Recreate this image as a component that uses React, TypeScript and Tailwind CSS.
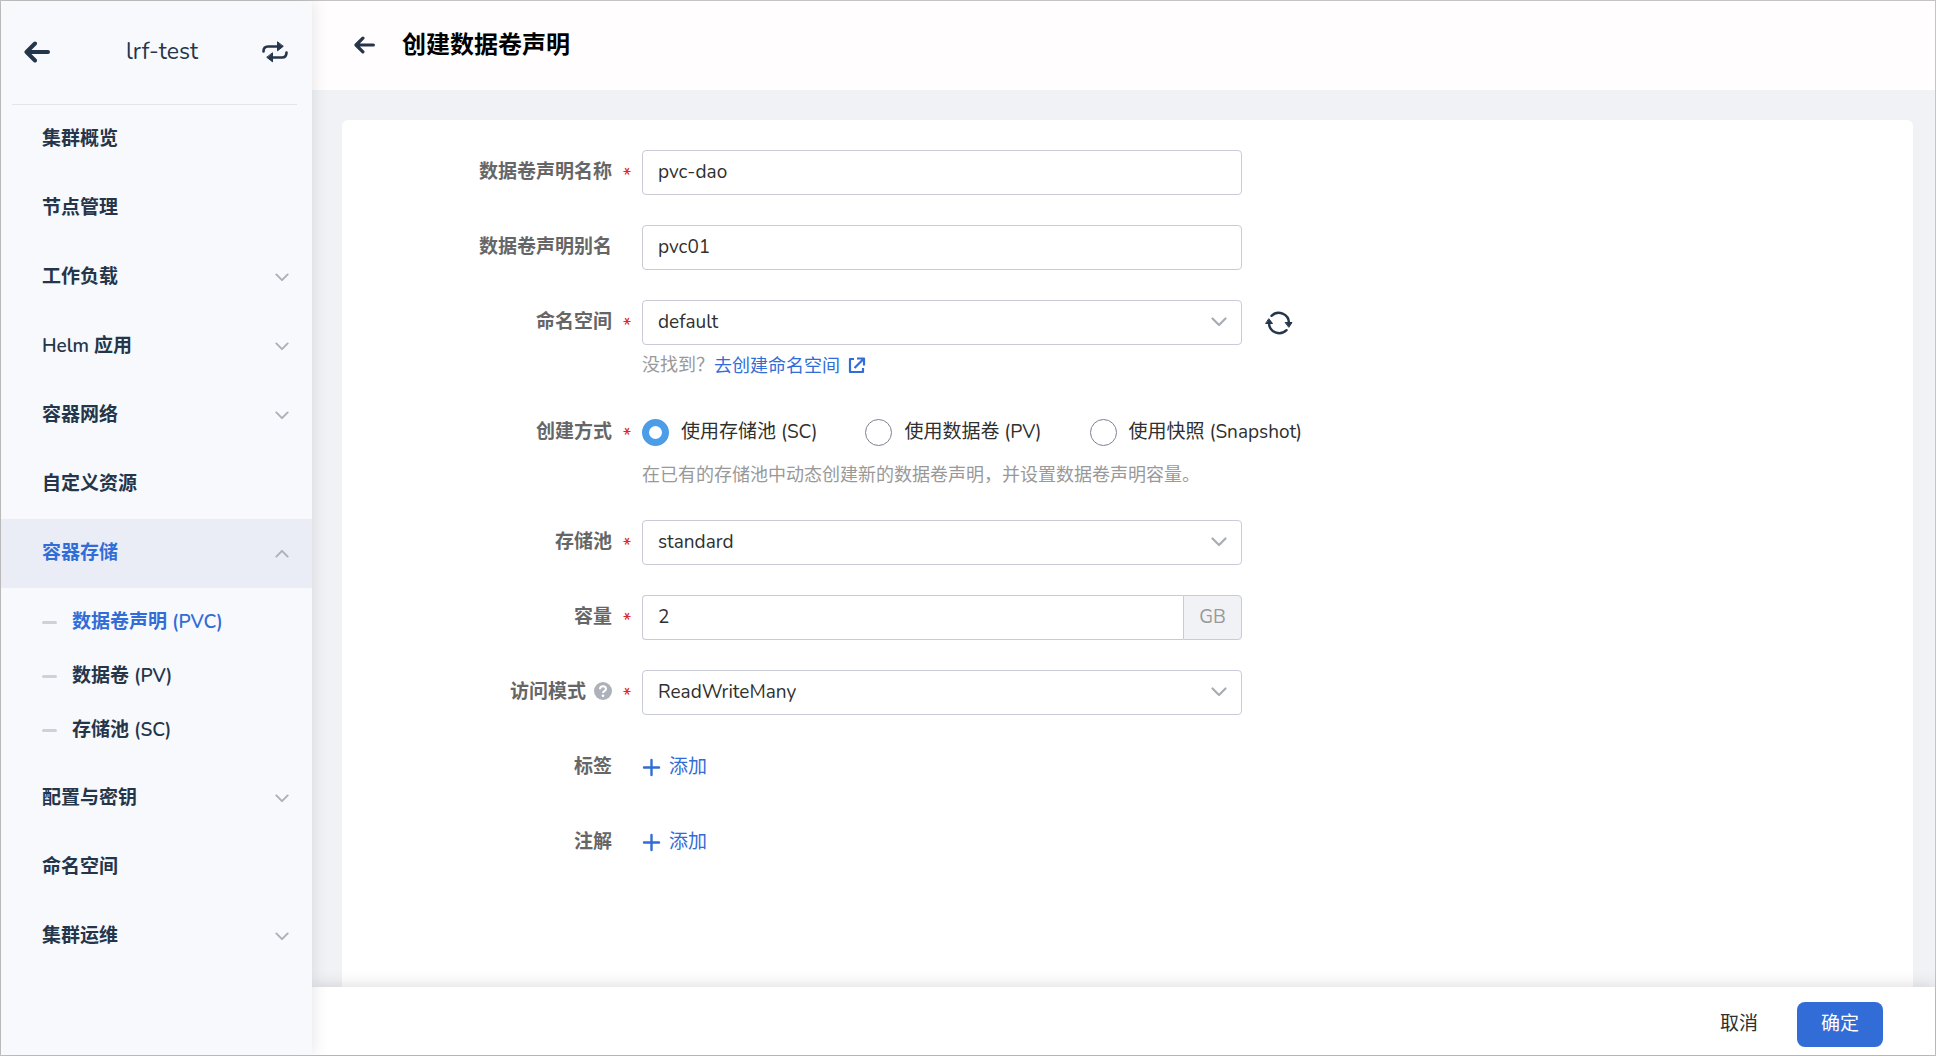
import { useState, type ReactNode } from 'react';

const navItems = [
  { title: '集群概览', key: 'overview' },
  { title: '节点管理', key: 'nodes' },
  { title: '工作负载', key: 'workloads', expandable: true },
  { title: 'Helm 应用', key: 'helm', expandable: true },
  { title: '容器网络', key: 'network', expandable: true },
  { title: '自定义资源', key: 'crd' },
  {
    title: '容器存储',
    key: 'storage',
    expandable: true,
    children: [
      { title: '数据卷声明 (PVC)', key: 'pvc' },
      { title: '数据卷 (PV)', key: 'pv' },
      { title: '存储池 (SC)', key: 'sc' },
    ],
  },
  { title: '配置与密钥', key: 'config', expandable: true },
  { title: '命名空间', key: 'namespaces' },
  { title: '集群运维', key: 'ops', expandable: true },
];

const createModes = [
  { value: 'sc', label: '使用存储池 (SC)' },
  { value: 'pv', label: '使用数据卷 (PV)' },
  { value: 'snapshot', label: '使用快照 (Snapshot)' },
];

const controlClass =
  'h-[45px] w-full rounded border border-[#c9cbd8] bg-white px-[15px] pb-px text-[19px] text-[#2f2f2f] outline-none focus:border-[#326cd6]';

function ArrowLeft({ className }: { className?: string }) {
  return (
    <svg viewBox="0 0 26 22" className={className} fill="none" stroke="currentColor" strokeWidth="4" strokeLinecap="round" strokeLinejoin="round" aria-hidden="true">
      <path d="M11 2.5 2.5 11 11 19.5M3 11h21" />
    </svg>
  );
}

function SwitchIcon() {
  return (
    <svg viewBox="0 0 26 22" className="h-[22px] w-[26px]" fill="none" stroke="currentColor" strokeWidth="2.6" strokeLinecap="round" aria-hidden="true">
      <path d="M1.5 10.500C1.500 7 3 5.500 6 5.500h11" />
      <path d="M24.500 11.500c0 3.500-1.500 5-4.500 5H9" />
      <path d="M15.500 1.200v8.600l5.500-4.300zM10.500 12.200v8.600L5 16.500z" fill="currentColor" strokeWidth="1" strokeLinejoin="round" />
    </svg>
  );
}

function Chevron({ className }: { className?: string }) {
  return (
    <svg viewBox="0 0 16 10" className={className} fill="none" stroke="currentColor" strokeWidth="2.2" strokeLinecap="round" strokeLinejoin="round" aria-hidden="true">
      <path d="m1.500 1.500 6.500 6.500 6.500-6.500" />
    </svg>
  );
}

function RefreshIcon() {
  return (
    <svg viewBox="0 0 28 24" className="h-6 w-7" fill="none" stroke="currentColor" strokeWidth="2.4" strokeLinecap="round" aria-hidden="true">
      <path d="M6.500 4.800A10.300 10.300 0 0 1 24 12" />
      <path d="M21.500 19.200A10.300 10.300 0 0 1 4 12" />
      <path d="M20.500 11.500h6.500L24 16zM1 12.500h6.500L4 8z" fill="currentColor" strokeWidth="1" strokeLinejoin="round" />
    </svg>
  );
}

function ExternalIcon() {
  return (
    <svg viewBox="0 0 18 18" className="size-[18px]" fill="none" stroke="currentColor" strokeWidth="2.2" strokeLinejoin="round" aria-hidden="true">
      <path d="M6 2H2v13h13v-4" />
      <path d="M9 1.500h7v7M16 1.500 6.500 11" />
    </svg>
  );
}

function HelpIcon() {
  return (
    <svg viewBox="0 0 18 18" className="size-[18px] text-[#adb2ba]" aria-hidden="true">
      <circle cx="9" cy="9" r="9" fill="currentColor" />
      <path d="M6 7.200C6 5.200 7.300 4.300 9 4.300s3 1 3 2.600C12 8.800 9 9 9 11" fill="none" stroke="white" strokeWidth="2" />
      <circle cx="9" cy="13.700" r="1.300" fill="white" />
    </svg>
  );
}

function Sidebar() {
  const [openKey, setOpenKey] = useState('storage');

  return (
    <aside className="z-20 flex w-[311px] shrink-0 flex-col bg-[#f7f9fd] text-[#25354a] shadow-[0_0_16px_rgba(0,0,0,0.12)]">
      <div className="mr-[15px] ml-[11px] flex h-[104px] items-center justify-between border-b border-[#e3e5ea] pr-[9px] pb-px pl-3">
        <button type="button" aria-label="返回">
          <ArrowLeft className="h-[22px] w-[26px]" />
        </button>
        <span className="ml-3 text-[23px]">lrf-test</span>
        <button type="button" aria-label="切换集群">
          <SwitchIcon />
        </button>
      </div>
      <nav>
        <ul>
          {navItems.map((item) => {
            const active = item.key === 'storage';
            const open = item.key === openKey;
            return (
              <li key={item.key}>
                <button
                  type="button"
                  aria-expanded={item.expandable ? open : undefined}
                  onClick={() => item.expandable && setOpenKey(open ? '' : item.key)}
                  className={`flex h-[69px] w-full items-center justify-between pr-[23px] pl-[41px] text-[19px] font-semibold ${active ? 'bg-[#eaedf6] text-[#326cd6]' : ''}`}
                >
                  {item.title}
                  {item.expandable && (
                    <Chevron className={`h-[9px] w-[14px] text-[#adb0b8] ${open ? 'rotate-180' : ''}`} />
                  )}
                </button>
                {item.children && open && (
                  <ul className="py-[7px]">
                    {item.children.map((child) => (
                      <li key={child.key}>
                        <a
                          href={`#${child.key}`}
                          className={`flex h-[54px] items-center gap-[15px] pl-[41px] text-[19px] font-semibold ${child.key === 'pvc' ? 'text-[#326cd6]' : ''}`}
                        >
                          <span className="h-[3px] w-[15px] rounded-full bg-[#cfd0db]" />
                          {child.title}
                        </a>
                      </li>
                    ))}
                  </ul>
                )}
              </li>
            );
          })}
        </ul>
      </nav>
    </aside>
  );
}

interface FieldProps {
  label: string;
  htmlFor?: string;
  required?: boolean;
  help?: boolean;
  hint?: ReactNode;
  children: ReactNode;
}

function Field({ label, htmlFor, required, help, hint, children }: FieldProps) {
  return (
    <div className="flex">
      <div className="flex h-[45px] w-[300px] shrink-0 items-center justify-end text-[19px] text-[#666]">
        <label htmlFor={htmlFor} className="font-semibold">{label}</label>
        {help && (
          <button type="button" aria-label="帮助" className="ml-2 pb-1">
            <HelpIcon />
          </button>
        )}
        <span className="w-[30px] pt-2 text-center font-medium text-[#e02b20]">{required && '*'}</span>
      </div>
      <div className="min-w-0 flex-1">
        <div className="flex min-h-[45px] items-center">{children}</div>
        {hint && <div className="flex h-[35px] pt-[6px] text-[18px] leading-7 text-[#999]">{hint}</div>}
      </div>
    </div>
  );
}

function Select({ id, options }: { id: string; options: string[] }) {
  return (
    <div className="relative w-full max-w-[600px]">
      <select id={id} className={`${controlClass} appearance-none`}>
        {options.map((o) => (
          <option key={o}>{o}</option>
        ))}
      </select>
      <Chevron className="pointer-events-none absolute top-[17px] right-[15px] h-[10px] w-4 text-[#a8adb5]" />
    </div>
  );
}

function AddButton({ id }: { id: string }) {
  return (
    <button id={id} type="button" className="flex items-center gap-2 text-[19px] text-[#326cd6]">
      <svg viewBox="0 0 19 19" className="size-[19px]" fill="none" stroke="currentColor" strokeWidth="2.4" strokeLinecap="round" aria-hidden="true">
        <path d="M9.500 2v15M2 9.500h15" />
      </svg>
      添加
    </button>
  );
}

export default function App() {
  const [mode, setMode] = useState('sc');

  return (
    <div className="flex h-screen border border-[#c4c4c4] bg-[#f1f2f6] font-['Nunito','Lato','Noto_Sans_CJK_SC',sans-serif]">
      <Sidebar />
      <main className="flex min-w-0 flex-1 flex-col">
        <header className="flex h-[89px] shrink-0 items-center gap-[27px] bg-[#fffdfe] px-[42px] pb-[2px]">
          <button type="button" aria-label="返回">
            <ArrowLeft className="h-[18px] w-[21px] text-[#25354a]" />
          </button>
          <h1 className="text-[24px] font-bold text-black">创建数据卷声明</h1>
        </header>

        <div className="flex min-h-0 flex-1 flex-col px-[22px] pt-[30px] pl-[30px]">
          <form id="pvc-form" className="flex flex-1 flex-col gap-[30px] rounded-t-md bg-white pt-[30px]">
            <Field label="数据卷声明名称" htmlFor="name" required>
              <input id="name" defaultValue="pvc-dao" className={`${controlClass} max-w-[600px]`} />
            </Field>
            <Field label="数据卷声明别名" htmlFor="alias">
              <input id="alias" defaultValue="pvc01" className={`${controlClass} max-w-[600px]`} />
            </Field>
            <Field
              label="命名空间"
              htmlFor="namespace"
              required
              hint={
                <>
                  没找到？
                  <a href="#namespaces" className="flex items-center gap-2 text-[#326cd6]">
                    去创建命名空间
                    <ExternalIcon />
                  </a>
                </>
              }
            >
              <Select id="namespace" options={['default', 'kube-system']} />
              <button type="button" aria-label="刷新" className="ml-[23px] text-[#25354a]">
                <RefreshIcon />
              </button>
            </Field>
            <Field label="创建方式" required hint="在已有的存储池中动态创建新的数据卷声明，并设置数据卷声明容量。">
              <div role="radiogroup" aria-label="创建方式" className="flex gap-12">
                {createModes.map((m) => (
                  <label key={m.value} className="flex items-center gap-3 text-[19px] text-[#2f2f2f]">
                    <input
                      type="radio"
                      name="mode"
                      value={m.value}
                      checked={mode === m.value}
                      onChange={() => setMode(m.value)}
                      className="size-[27px] appearance-none rounded-full border border-[#7d8290] bg-white checked:border-[7px] checked:border-[#4a9de6]"
                    />
                    {m.label}
                  </label>
                ))}
              </div>
            </Field>
            <Field label="存储池" htmlFor="pool" required>
              <Select id="pool" options={['standard']} />
            </Field>
            <Field label="容量" htmlFor="capacity" required>
              <div className="flex w-full max-w-[600px]">
                <input id="capacity" defaultValue="2" className={`${controlClass} rounded-r-none border-r-0`} />
                <span className="flex w-[59px] shrink-0 items-center justify-center rounded-r border border-[#c9cbd8] bg-[#f1f2f6] text-[19px] text-[#999]">
                  GB
                </span>
              </div>
            </Field>
            <Field label="访问模式" htmlFor="access" required help>
              <Select id="access" options={['ReadWriteMany', 'ReadWriteOnce', 'ReadOnlyMany']} />
            </Field>
            <Field label="标签" htmlFor="labels">
              <AddButton id="labels" />
            </Field>
            <Field label="注解" htmlFor="annotations">
              <AddButton id="annotations" />
            </Field>
          </form>
        </div>

        <footer className="z-10 flex h-[68px] shrink-0 items-center justify-end gap-[39px] bg-white pt-[7px] pr-[52px] shadow-[0_0_16px_rgba(0,0,0,0.16)]">
          <button type="button" className="text-[19px] text-[#2f2f2f]">取消</button>
          <button type="submit" form="pvc-form" className="h-[45px] rounded-lg bg-[#326cd6] px-6 text-[19px] text-white">
            确定
          </button>
        </footer>
      </main>
    </div>
  );
}
